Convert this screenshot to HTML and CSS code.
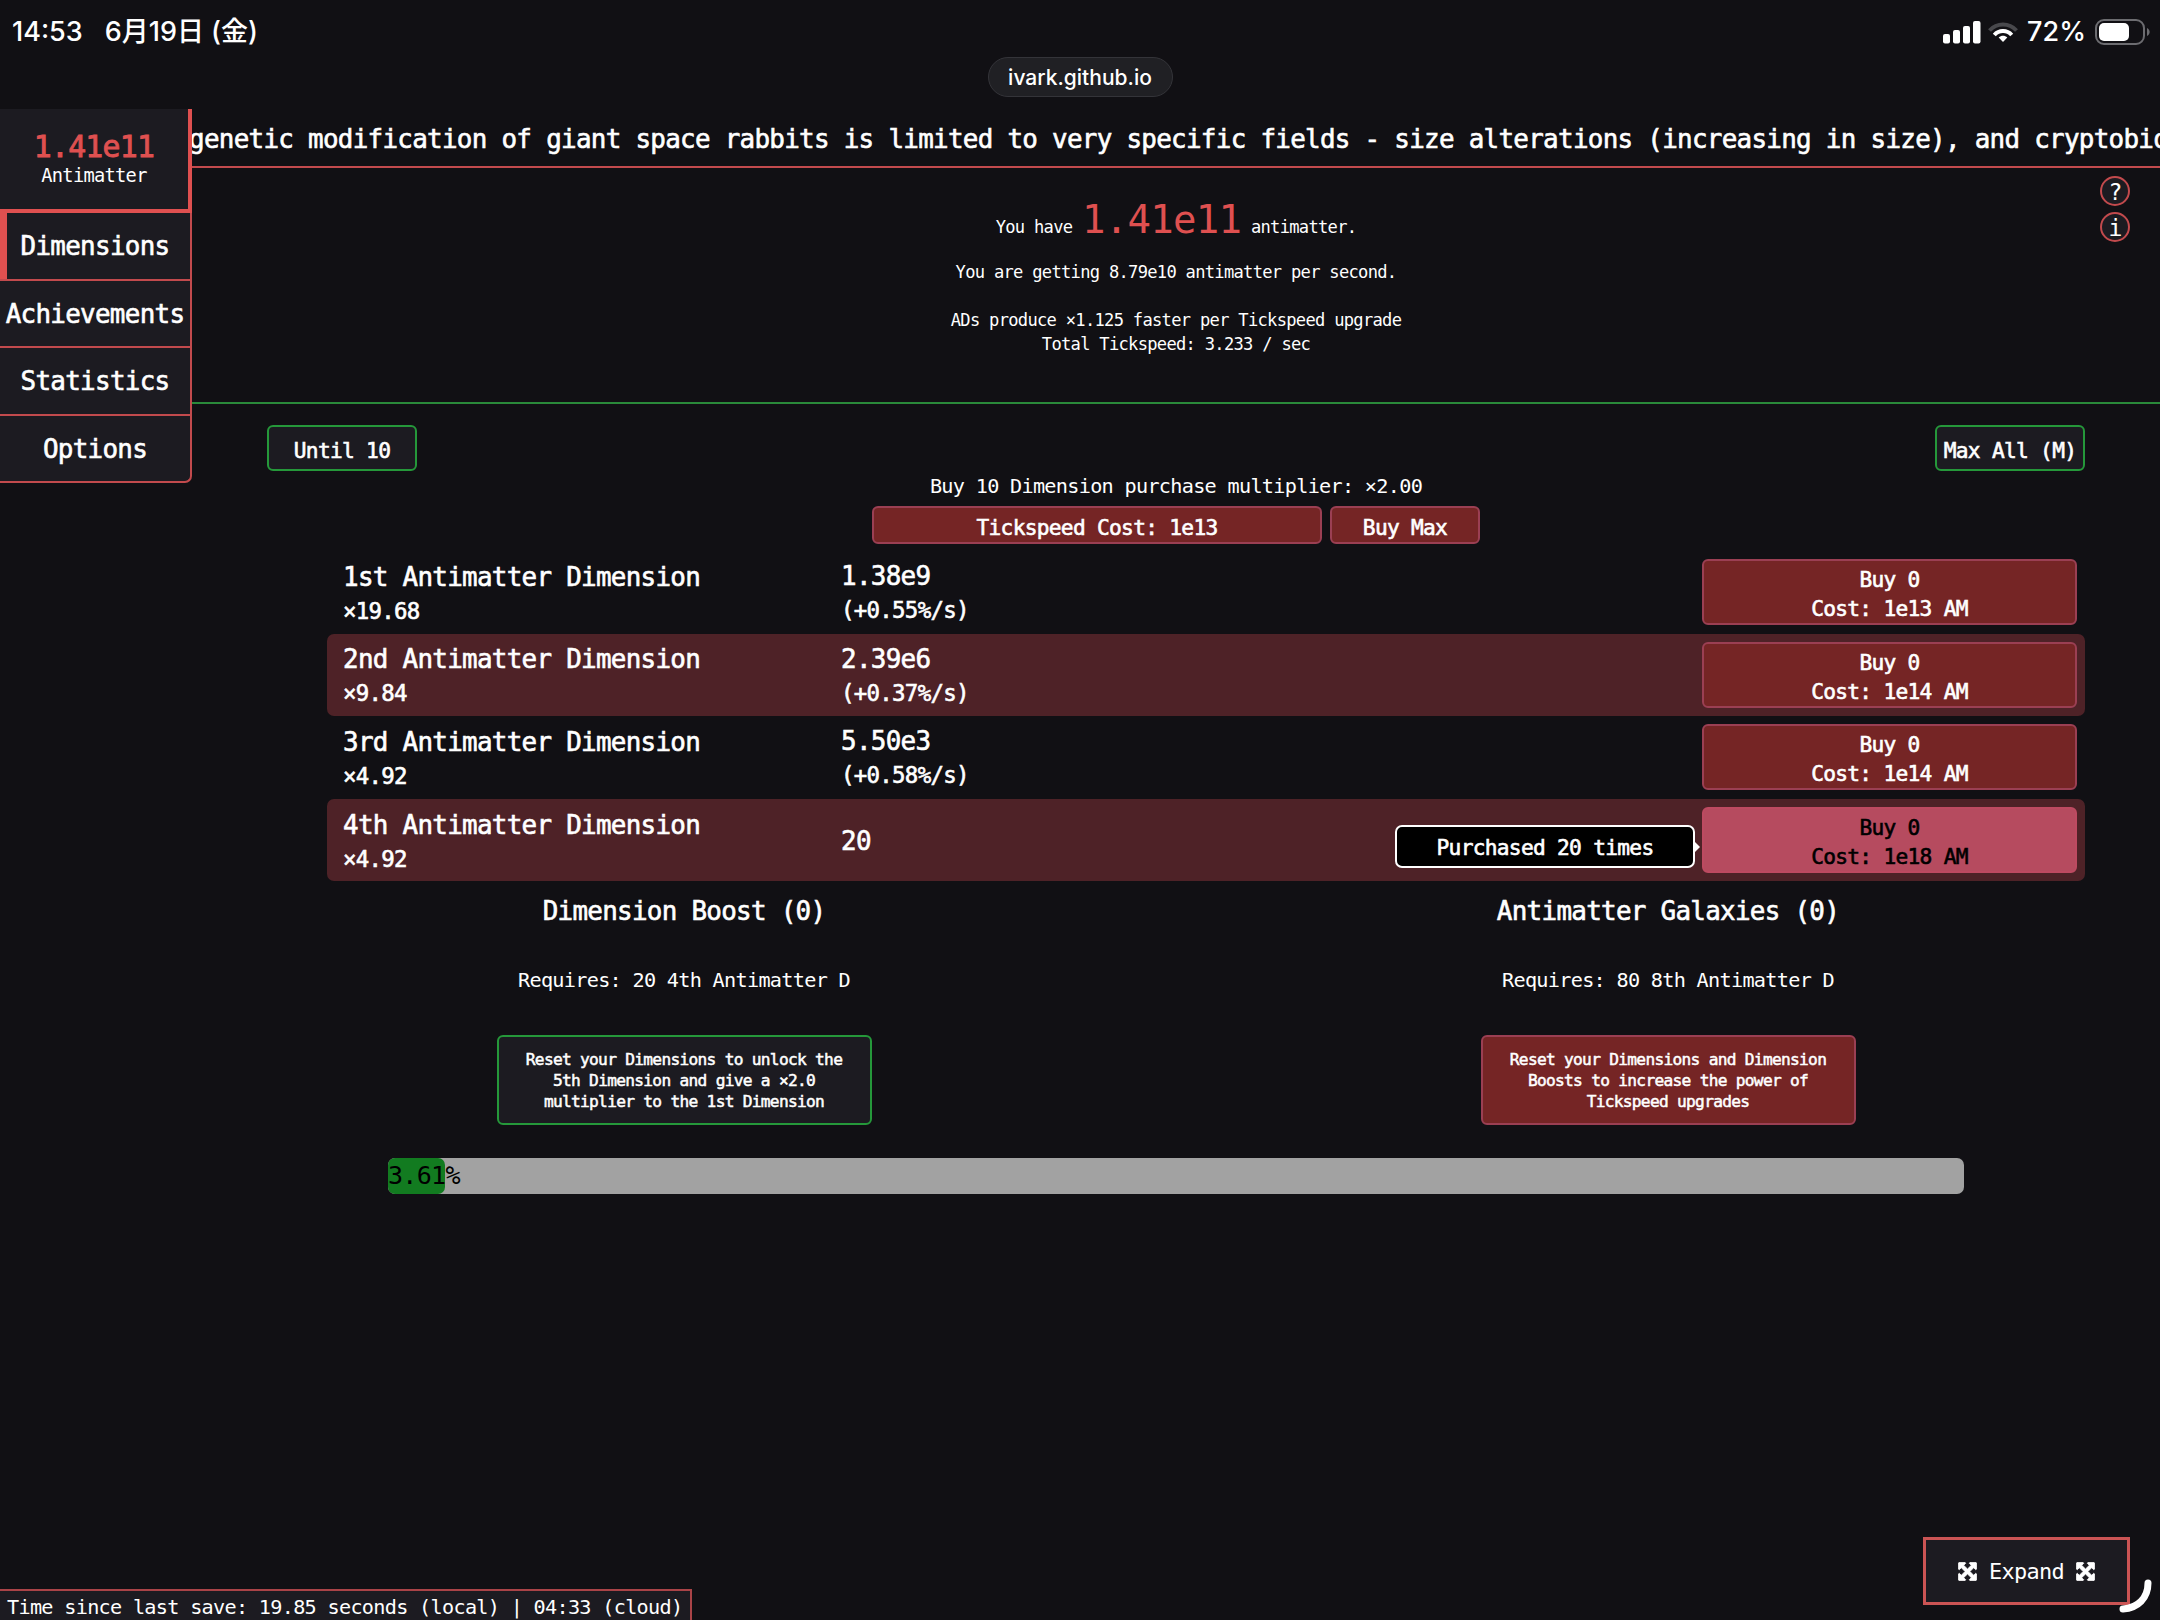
FILE: index.html
```html
<!DOCTYPE html>
<html lang="en">
<head>
  <meta charset="UTF-8">
  <meta name="viewport" content="width=device-width, initial-scale=1.0">
  <title>Antimatter Dimensions</title>
  <link rel="stylesheet" href="styles.css">
</head>
<body>
  <header class="device-bar">
    <div class="status">
      <div class="status-left">
        <span class="clock">14:53</span>
        <span class="date">6月19日<span class="weekday">(金)</span></span>
      </div>
      <div class="status-right">
        <svg class="signal" viewBox="0 0 38 23" fill="#fff">
          <rect x="0" y="13" width="7" height="9.5" rx="2"/>
          <rect x="10" y="9" width="7" height="13.5" rx="2"/>
          <rect x="20" y="5" width="7" height="17.5" rx="2"/>
          <rect x="30" y="0" width="7.5" height="22.5" rx="2"/>
        </svg>
        <svg class="wifi" viewBox="0 0 30 20" fill="none" stroke-width="4">
          <path d="M1.5 8.5C9 .5 21 .5 28.500 8.500" stroke="#48484c"/>
          <path d="M6.300 13C11 7.700 19 7.700 23.700 13" stroke="#fff"/>
          <path d="M15 20l-4.300-4.500c2.500-2.200 6.100-2.200 8.600 0z" fill="#fff"/>
        </svg>
        <span class="percent">72%</span>
        <svg class="battery" viewBox="0 0 55 26">
          <rect x="1" y="1" width="48" height="24" rx="8" fill="none" stroke="#6c6c70" stroke-width="2"/>
          <rect x="4" y="4" width="30" height="18" rx="5" fill="#fff"/>
          <path d="M52 9c3.500 1.500 3.500 6.500 0 8z" fill="#6c6c70"/>
        </svg>
      </div>
    </div>
    <div class="url">ivark.github.io</div>
  </header>

  <div class="game">
    <nav class="sidebar">
      <div class="currency">
        <div class="currency-value">1.41e11</div>
        <div class="currency-name">Antimatter</div>
      </div>
      <a class="tab tab-active">Dimensions</a>
      <a class="tab">Achievements</a>
      <a class="tab">Statistics</a>
      <a class="tab tab-last">Options</a>
    </nav>

    <main class="main">
      <div class="ticker">genetic modification of giant space rabbits is limited to very specific fields - size alterations (increasing in size), and cryptobiosis</div>

      <section class="summary">
        <p class="have">You have <span class="amount-big">1.41e11</span> antimatter.</p>
        <p class="rate">You are getting 8.79e10 antimatter per second.</p>
        <p class="tickspeed-info">ADs produce ×1.125 faster per Tickspeed upgrade<br>Total Tickspeed: 3.233 / sec</p>
        <div class="help">
          <span class="help-btn">?</span>
          <span class="help-btn">i</span>
        </div>
      </section>

      <section class="dimensions">
        <div class="controls">
          <button class="btn btn-on">Until 10</button>
          <button class="btn btn-on">Max All (M)</button>
        </div>
        <p class="multiplier">Buy 10 Dimension purchase multiplier: ×2.00</p>
        <div class="tickspeed">
          <button class="btn btn-off tick-cost">Tickspeed Cost: 1e13</button>
          <button class="btn btn-off tick-max">Buy Max</button>
        </div>

        <div class="rows">
          <div class="row">
            <div class="name">1st Antimatter Dimension<small>×19.68</small></div>
            <div class="count">1.38e9<small>(+0.55%/s)</small></div>
            <button class="btn btn-off buy">Buy 0<br>Cost: 1e13 AM</button>
          </div>
          <div class="row row-alt">
            <div class="name">2nd Antimatter Dimension<small>×9.84</small></div>
            <div class="count">2.39e6<small>(+0.37%/s)</small></div>
            <button class="btn btn-off buy">Buy 0<br>Cost: 1e14 AM</button>
          </div>
          <div class="row">
            <div class="name">3rd Antimatter Dimension<small>×4.92</small></div>
            <div class="count">5.50e3<small>(+0.58%/s)</small></div>
            <button class="btn btn-off buy">Buy 0<br>Cost: 1e14 AM</button>
          </div>
          <div class="row row-alt">
            <div class="name">4th Antimatter Dimension<small>×4.92</small></div>
            <div class="count">20</div>
            <button class="btn btn-off btn-hover buy">Buy 0<br>Cost: 1e18 AM
              <span class="tooltip">Purchased 20 times</span>
            </button>
          </div>
        </div>
      </section>

      <section class="resets">
        <div class="reset">
          <h2>Dimension Boost (0)</h2>
          <p>Requires: 20 4th Antimatter D</p>
          <button class="btn btn-on reset-btn">Reset your Dimensions to unlock the<br>5th Dimension and give a ×2.0<br>multiplier to the 1st Dimension</button>
        </div>
        <div class="reset">
          <h2>Antimatter Galaxies (0)</h2>
          <p>Requires: 80 8th Antimatter D</p>
          <button class="btn btn-off reset-btn">Reset your Dimensions and Dimension<br>Boosts to increase the power of<br>Tickspeed upgrades</button>
        </div>
      </section>

      <div class="progress">
        <div class="progress-fill" style="width: 3.61%"></div>
        <span class="progress-label">3.61%</span>
      </div>
    </main>
  </div>

  <div class="save-timer">Time since last save: 19.85 seconds (local) | 04:33 (cloud)</div>

  <svg width="0" height="0" class="defs">
    <symbol id="arrows" viewBox="0 0 20 20">
      <path d="M1 .5h6.500l.7.800-2.200 2.200L10 7.400l4-3.900-2.200-2.200.7-.8H19l.5.500v6.500l-.8.700-2.200-2.200L12.600 10l3.900 4 2.200-2.200.8.700V19l-.5.500h-6.500l-.7-.8 2.200-2.200-4-3.900-4 3.900 2.200 2.200-.7.800H1L.5 19v-6.500l.8-.7L3.500 14l3.900-4-3.900-4-2.200 2.200-.8-.7V1z" fill="#fff" stroke="#fff" stroke-width=".8"/>
    </symbol>
  </svg>
  <div class="expand">
    <svg class="arrows"><use href="#arrows"/></svg>
    <span>Expand</span>
    <svg class="arrows"><use href="#arrows"/></svg>
  </div>
  <svg class="corner" viewBox="0 0 34 34" fill="none" stroke="#fff" stroke-width="7" stroke-linecap="round">
    <path d="M30 4C30 19 20 29 5 30"/>
  </svg>
</body>
</html>
```
FILE: styles.css
```css
/* General styles */
* {
  box-sizing: border-box;
}

body {
  position: relative;
  margin: 0;
  height: 1620px;
  overflow: hidden;
  background: #111014;
  color: #fff;
  font-family: "DejaVu Sans Mono", "Liberation Mono", monospace;
  font-size: 20.2px;
  letter-spacing: -0.035em;
}

p, h2 {
  margin: 0;
  font-weight: normal;
}

/* Device bar */
.device-bar {
  height: 109px;
  font-family: Inter, "Noto Sans CJK JP", sans-serif;
  font-weight: 500;
  letter-spacing: 0;
}

.status {
  display: flex;
  justify-content: space-between;
  height: 57px;
  padding: 7px 10px 0 12px;
  line-height: 50px;
  font-size: 27px;
}

.status-left, .status-right {
  display: flex;
  align-items: center;
}

.status-left {
  gap: 22px;
}

.weekday {
  margin-left: 7px;
}

.signal {
  width: 38px;
  height: 23px;
}

.wifi {
  width: 30px;
  height: 20px;
  margin: 0 9px 0 7px;
}

.battery {
  width: 55px;
  height: 26px;
  margin-left: 9px;
}

.url {
  width: 185px;
  height: 40px;
  margin: 0 auto;
  border: 1px solid #343439;
  border-radius: 20px;
  background: #202024;
  font-size: 21px;
  line-height: 39px;
  text-align: center;
}

.game {
  display: flex;
  align-items: flex-start;
}

/* Sidebar */
.sidebar {
  width: 192px;
  flex: none;
  text-align: center;
}

.currency {
  height: 104px;
  padding-top: 22px;
  border-right: 4px solid #df5050;
  border-bottom: 4px solid #df5050;
  background: #1c1b21;
}

.currency-value {
  color: #df5050;
  font-size: 29.8px;
  line-height: 32px;
  -webkit-text-stroke: 0.9px;
}

.currency-name {
  font-size: 18.7px;
  line-height: 25px;
}

.tab {
  display: block;
  height: 67.6px;
  border-right: 2px solid #c24a4d;
  border-bottom: 2px solid #c24a4d;
  background: #1c1b21;
  font-size: 25.9px;
  line-height: 67px;
  -webkit-text-stroke: 0.6px;
  white-space: nowrap;
}

.tab-active {
  box-shadow: inset 7px 0 #df5050;
}

.tab-last {
  border-bottom-right-radius: 7px;
}

/* News ticker */
.main {
  flex: 1;
  min-width: 0;
}

.ticker {
  height: 59px;
  border-bottom: 2px solid #c24a4d;
  overflow: hidden;
  font-size: 25.9px;
  line-height: 60px;
  white-space: nowrap;
  text-indent: -3px;
  -webkit-text-stroke: 0.6px;
}

/* Antimatter summary */
.summary {
  position: relative;
  height: 236px;
  padding-top: 22px;
  border-bottom: 2px solid #2a8a3a;
  font-size: 17.1px;
  line-height: 24px;
  text-align: center;
}

.have {
  height: 70px;
  line-height: 60px;
}

.amount-big {
  color: #df5050;
  font-size: 39px;
}

.tickspeed-info {
  margin-top: 24px;
}

.help {
  position: absolute;
  top: 8px;
  right: 30px;
  display: flex;
  flex-direction: column;
  gap: 6px;
}

.help-btn {
  width: 30px;
  height: 30px;
  border: 2px solid #c24a4d;
  border-radius: 50%;
  background: #1c1b21;
  font-size: 23px;
  line-height: 29px;
}

/* Buttons */
.btn {
  padding: 4px 0 0;
  border: 2px solid;
  border-radius: 6px;
  color: #fff;
  font-family: inherit;
  font-size: 21.2px;
  letter-spacing: inherit;
  line-height: 29px;
  -webkit-text-stroke: 0.6px;
}

.btn-on {
  border-color: #25983a;
  background: #1c1b21;
}

.btn-off {
  border-color: #9b3f53;
  background: #752525;
}

.btn-hover {
  border-color: #bd4a61;
  background: #b64b5f;
  color: #000;
}

/* Dimensions */
.dimensions {
  padding: 21px 75px 0;
}

.controls {
  display: flex;
  justify-content: space-between;
}

.controls .btn {
  width: 150px;
  height: 46px;
}

.multiplier {
  margin-top: 1px;
  line-height: 28px;
  text-align: center;
}

.tickspeed {
  display: flex;
  justify-content: center;
  gap: 8px;
  margin: 6px 0 7px;
}

.tickspeed .btn {
  height: 38px;
  padding-top: 5px;
}

.tick-cost {
  width: 450px;
}

.tick-max {
  width: 150px;
}

.rows {
  margin-left: 60px;
}

.row {
  display: flex;
  align-items: center;
  height: 82.6px;
  padding: 0 8px 0 16px;
  border-radius: 7px;
  font-size: 25.9px;
  line-height: 34px;
  -webkit-text-stroke: 0.6px;
}

.row-alt {
  background: #4e2227;
}

.name {
  width: 498px;
  padding-top: 3px;
}

.count {
  flex: 1;
  padding-top: 2px;
}

.row small {
  display: block;
  font-size: 22.4px;
}

.buy {
  position: relative;
  width: 375px;
  height: 66px;
}

.tooltip {
  position: absolute;
  right: 380px;
  top: 16px;
  width: 300px;
  height: 43px;
  border: 2px solid #fff;
  border-radius: 7px;
  background: #000;
  color: #fff;
  line-height: 41px;
}

.tooltip::after {
  content: "";
  position: absolute;
  left: 100%;
  top: 13px;
  border: 7px solid transparent;
  border-left-color: #fff;
  border-right-width: 0;
}

/* Boosts and galaxies */
.resets {
  display: flex;
  text-align: center;
}

.reset {
  flex: 1;
}

.reset h2 {
  font-size: 25.9px;
  line-height: 61px;
  -webkit-text-stroke: 0.6px;
}

.reset p {
  margin: 18px 0 35px;
  line-height: 40px;
}

.reset-btn {
  width: 375px;
  height: 90px;
  padding: 0;
  font-size: 16.2px;
  line-height: 21px;
  -webkit-text-stroke: 0.5px;
}

.progress {
  position: relative;
  width: 1576px;
  height: 36px;
  margin: 33px auto 0;
  border-radius: 7px;
  background: #a2a2a2;
}

.progress-fill {
  height: 100%;
  border-radius: 7px;
  background: #127b20;
}

.progress-label {
  position: absolute;
  left: 0;
  top: 0;
  color: #000;
  font-size: 25px;
  line-height: 36px;
}

/* Overlays pinned to the bottom */
.save-timer {
  position: absolute;
  left: 0;
  bottom: 0;
  width: 692px;
  height: 31px;
  padding-left: 7px;
  border-top: 2px solid #a94347;
  border-right: 2px solid #a94347;
  background: #1c1b21;
  line-height: 33px;
  white-space: nowrap;
}

.defs {
  position: absolute;
}

.expand {
  position: absolute;
  right: 30px;
  bottom: 15px;
  display: flex;
  align-items: center;
  justify-content: center;
  gap: 12px;
  width: 207px;
  height: 68px;
  border: 3px solid #cb5454;
  background: #1c1b21;
  font-size: 21.9px;
}

.arrows {
  width: 19px;
  height: 19px;
}

.corner {
  position: absolute;
  right: 8px;
  bottom: 7px;
  width: 34px;
  height: 34px;
}
```
